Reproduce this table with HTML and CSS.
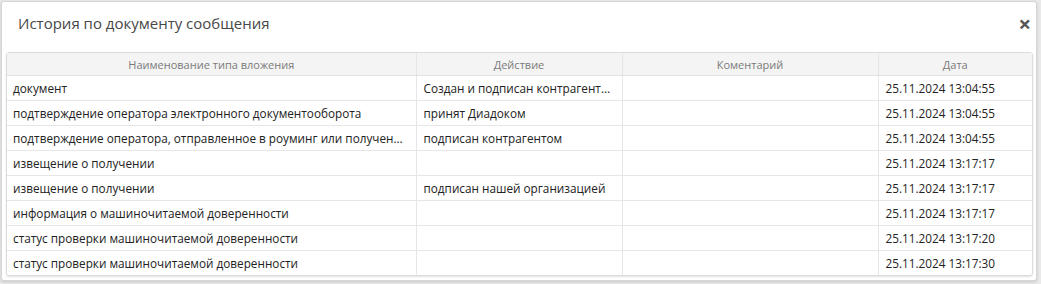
FILE: index.html
```html
<!DOCTYPE html>
<html lang="ru">
<head>
<meta charset="utf-8">
<link rel="stylesheet" href="styles.css">
</head>
<body>
<div class="dialog">
  <div class="dialog-head">
    <div class="dialog-title">История по документу сообщения</div>
    <div class="dialog-close">×</div>
  </div>
  <div class="grid-wrap">
    <table class="grid">
      <colgroup>
        <col class="c1"><col class="c2"><col class="c3"><col class="c4">
      </colgroup>
      <thead>
        <tr><th>Наименование типа вложения</th><th>Действие</th><th>Коментарий</th><th>Дата</th></tr>
      </thead>
      <tbody>
        <tr><td>документ</td><td>Создан и подписан контрагентом и отправлен</td><td></td><td>25.11.2024 13:04:55</td></tr>
        <tr><td>подтверждение оператора электронного документооборота</td><td>принят Диадоком</td><td></td><td>25.11.2024 13:04:55</td></tr>
        <tr><td>подтверждение оператора, отправленное в роуминг или полученное из роуминга</td><td>подписан контрагентом</td><td></td><td>25.11.2024 13:04:55</td></tr>
        <tr><td>извещение о получении</td><td></td><td></td><td>25.11.2024 13:17:17</td></tr>
        <tr><td>извещение о получении</td><td>подписан нашей организацией</td><td></td><td>25.11.2024 13:17:17</td></tr>
        <tr><td>информация о машиночитаемой доверенности</td><td></td><td></td><td>25.11.2024 13:17:17</td></tr>
        <tr><td>статус проверки машиночитаемой доверенности</td><td></td><td></td><td>25.11.2024 13:17:20</td></tr>
        <tr><td>статус проверки машиночитаемой доверенности</td><td></td><td></td><td>25.11.2024 13:17:30</td></tr>
      </tbody>
    </table>
  </div>
</div>
</body>
</html>
```
FILE: styles.css
```css
html, body {
  margin: 0;
  padding: 0;
}
body {
  background: #e9e9e9;
  font-family: "Open Sans", "Noto Sans", sans-serif;
  width: 1041px;
  height: 284px;
  overflow: hidden;
}
.dialog {
  margin: 1px 4px 0 1px;
  height: 280px;
  box-sizing: border-box;
  background: #fff;
  border: 1px solid #d6d6d6;
  border-radius: 3px;
  box-shadow: 0 1px 3px rgba(0,0,0,0.15);
}
.dialog-head {
  display: flex;
  align-items: center;
  justify-content: space-between;
  height: 45px;
  padding: 0 5px 0 16px;
}
.dialog-title {
  font-size: 15px;
  color: #474747;
  padding-bottom: 4px;
}
.dialog-close {
  font-size: 22px;
  font-weight: bold;
  color: #555;
  line-height: 1;
  padding-bottom: 4px;
}
.grid-wrap {
  margin: 5px 3px 0 4px;
  border: 1px solid #dcdcdc;
  border-radius: 3px;
  box-shadow: 0 1px 2px rgba(0,0,0,0.12);
}
.grid {
  width: 100%;
  table-layout: fixed;
  border-collapse: collapse;
  font-size: 11.75px;
}
.c1 { width: 409px; }
.c2 { width: 206px; }
.c3 { width: 256px; }
.c4 { width: auto; }
.grid th {
  height: 22px;
  background: #f4f4f4;
  color: #7a7a7a;
  font-weight: normal;
  font-size: 11px;
  text-align: center;
  border-bottom: 1px solid #e2e2e2;
  border-left: 1px solid #e6e6e6;
  padding: 0 6px;
}
.grid td {
  height: 24px;
  color: #222;
  border-top: 1px solid #e6e6e6;
  border-left: 1px solid #e6e6e6;
  padding: 0 6px;
  white-space: nowrap;
  overflow: hidden;
  text-overflow: ellipsis;
}
.grid th:first-child, .grid td:first-child { border-left: none; }
.grid tbody tr:first-child td { border-top: none; }
.grid td:nth-child(2), .grid td:nth-child(4) { padding-left: 7px; }
```
